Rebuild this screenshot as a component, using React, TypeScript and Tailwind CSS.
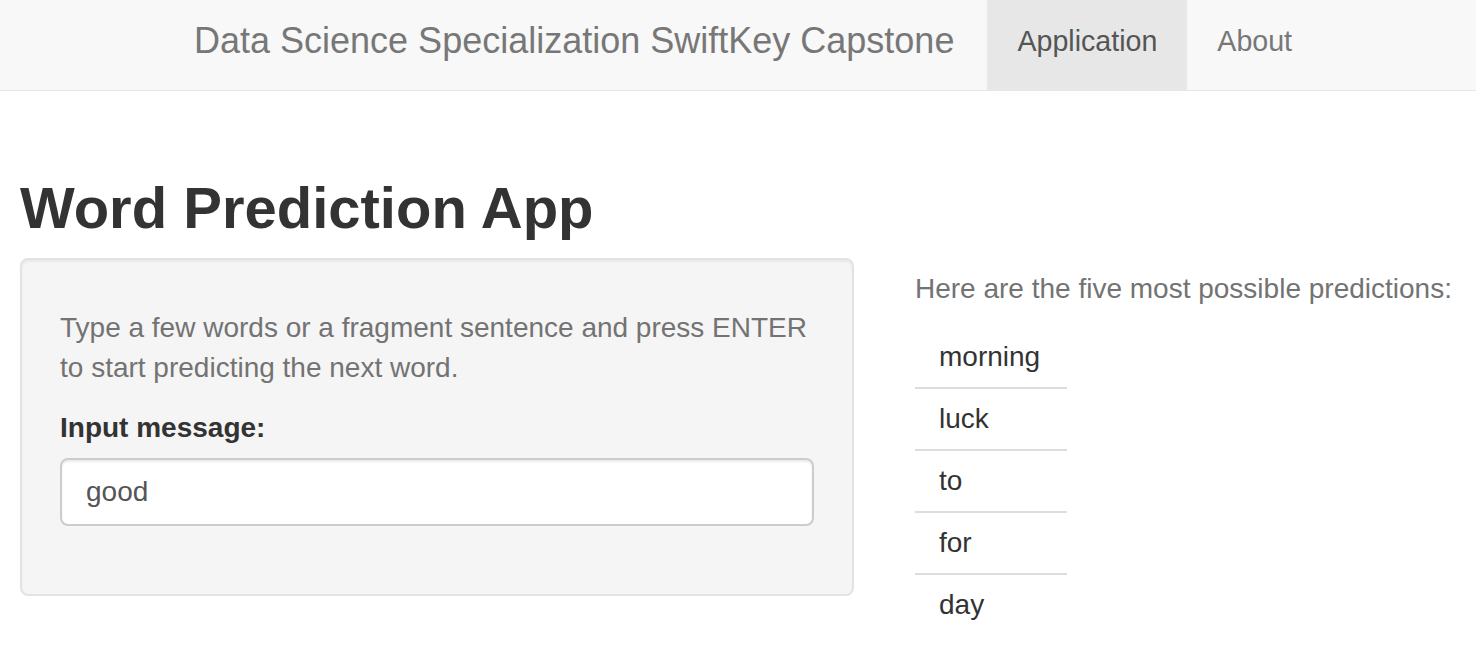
export default function App() {
  const predictions = ['morning', 'luck', 'to', 'for', 'day'];

  return (
    <div className="min-h-[664px] bg-white font-['Liberation_Sans',Arial,sans-serif] text-[#333]">
      {/* Navbar */}
      <nav className="flex h-[91px] items-stretch border-b border-[#e7e7e7] bg-[#f8f8f8] pl-[164px]">
        <a href="#" className="flex items-center px-[30px] pb-[9px] text-[36px] text-[#777]">
          Data Science Specialization SwiftKey Capstone
        </a>
        <a href="#" className="ml-[3px] flex items-center bg-[#e7e7e7] px-[30px] pb-[8px] text-[28.6px] text-[#555]">
          Application
        </a>
        <a href="#" className="flex items-center px-[30px] pb-[8px] text-[28.6px] text-[#777]">
          About
        </a>
      </nav>

      <div className="px-[20px]">
        <h2 className="mt-[85px] text-[58px] font-bold leading-[64px] text-[#333]">Word Prediction App</h2>

        <div className="mt-[18px] flex items-start">
          {/* Input well */}
          <div className="w-[834px] rounded-[8px] border-2 border-[#e3e3e3] bg-[#f5f5f5] p-[38px] shadow-[inset_0_2px_2px_rgba(0,0,0,0.05)]">
            <p className="mt-[10px] mb-[20px] text-[28px] leading-[40px] text-[#737373]">
              Type a few words or a fragment sentence and press ENTER
              <br />
              to start predicting the next word.
            </p>
            <label className="mb-[10px] block text-[28px] font-bold leading-[40px] text-[#333]">Input message:</label>
            <div className="mb-[30px] flex h-[68px] w-[754px] items-center rounded-[8px] border-2 border-[#ccc] bg-white px-[24px] text-[28px] text-[#555] shadow-[inset_0_2px_2px_rgba(0,0,0,0.075)]">
              good
            </div>
          </div>

          {/* Predictions */}
          <div className="ml-[61px] pt-[11px]">
            <p className="text-[28px] leading-[40px] text-[#737373]">Here are the five most possible predictions:</p>
            <div className="mt-[16px] w-[152px]">
              {predictions.map((word, i) => (
                <div
                  key={word}
                  className={`border-t-2 py-[10px] pl-[24px] text-[28px] leading-[40px] text-[#333] ${i === 0 ? 'border-transparent' : 'border-[#ddd]'}`}
                >
                  {word}
                </div>
              ))}
            </div>
          </div>
        </div>
      </div>
    </div>
  );
}
